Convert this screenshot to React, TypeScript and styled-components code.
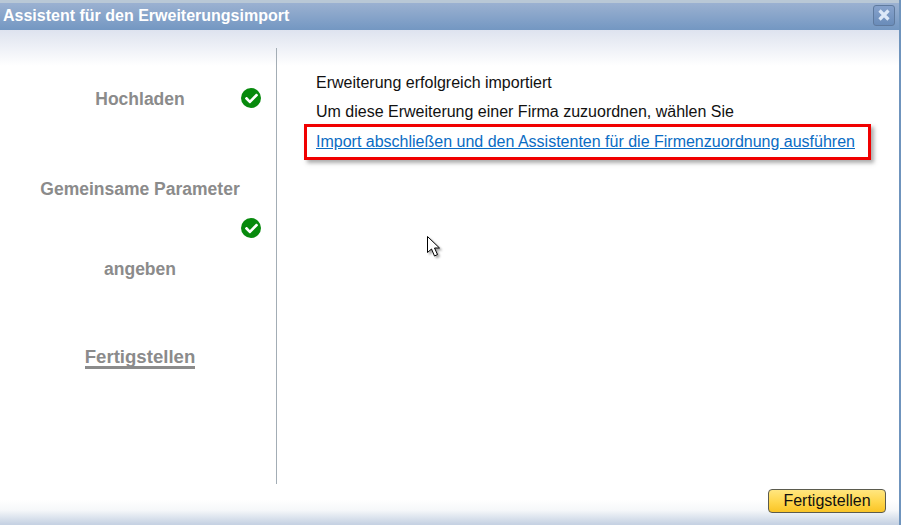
import styled, { createGlobalStyle } from "styled-components";
import { FaCheck } from "react-icons/fa";

const GlobalStyle = createGlobalStyle`
    html, body {
        margin: 0;
        padding: 0;
        background: #fff;
    }
    body {
        font-family: "Liberation Sans", Arial, sans-serif;
    }
`;

const Window = styled.div`
    position: relative;
    width: 901px;
    height: 525px;
    box-sizing: border-box;
    overflow: hidden;
    display: flex;
    flex-direction: column;
    border-right: 2px solid #6f94bd;
    background: linear-gradient(
        to bottom,
        #dee3ef 30px,
        #ffffff 66px,
        #ffffff 500px,
        #f6f8fa 510px,
        #c6d2e3 524px
    );
`;

const TitleBar = styled.div`
    height: 30px;
    box-sizing: border-box;
    flex-shrink: 0;
    display: flex;
    align-items: center;
    justify-content: space-between;
    padding: 3px 4px 0 3px;
    border-top: 3px solid #b9c8d6;
    background: linear-gradient(to bottom, #9bb1d1, #7397c2);
`;

const Title = styled.h1`
    margin: 0;
    font-size: 16px;
    font-weight: bold;
    color: #fff;
    position: relative;
    top: -2px;
`;

const CloseButton = styled.button`
    width: 22px;
    height: 21px;
    padding: 0;
    display: flex;
    align-items: center;
    justify-content: center;
    position: relative;
    top: -3px;
    border: 1px solid #5f7a9e;
    border-radius: 3px;
    background: linear-gradient(to bottom, #86a2cc, #6a8cb9);

    svg {
        display: block;
    }
`;

const Body = styled.div`
    flex: 1;
    display: flex;
    padding-top: 18px;
`;

const Sidebar = styled.nav`
    width: 277px;
    height: 436px;
    box-sizing: border-box;
    padding: 30px 0 0 40px;
    border-right: 1px solid #a3adb5;
    display: flex;
    flex-direction: column;
    gap: 50px;
`;

const Step = styled.div`
    display: flex;
    flex-direction: column;
`;

const StepLine = styled.div`
    height: 40px;
    display: grid;
    grid-template-columns: 200px 21px;
    column-gap: 1px;
    align-items: center;
`;

const StepLabel = styled.span<{ $current?: boolean }>`
    justify-self: center;
    position: relative;
    top: ${props => (props.$current ? "0" : "1px")};
    font-size: ${props => (props.$current ? "18.6px" : "17.5px")};
    font-weight: bold;
    line-height: 19px;
    white-space: nowrap;
    color: #8b8b8b;
    ${props => props.$current && "border-bottom: 3px solid #8b8b8b;"}
`;

const CheckBadge = styled.span`
    grid-column: 2;
    width: 20px;
    height: 20px;
    border-radius: 50%;
    display: flex;
    align-items: center;
    justify-content: center;
    background: #078a0d;
    color: #fff;
    font-size: 13px;
`;

const Content = styled.main`
    flex: 1;
    padding: 23px 0 0 27px;
    font-size: 16px;
    color: #111;
`;

const Line = styled.p`
    margin: 0 0 0 12px;
    height: 29px;
    line-height: 24px;
`;

const Highlight = styled.div`
    width: 567px;
    height: 36px;
    box-sizing: border-box;
    margin-top: -5px;
    padding-left: 9px;
    display: flex;
    align-items: center;
    border: 3px solid #f00000;
    box-shadow: 3px 3px 4px rgba(90, 90, 90, 0.5);
`;

const WizardLink = styled.a`
    color: #0a6cc4;
    text-decoration: underline;
    white-space: nowrap;
    cursor: pointer;
`;

const Footer = styled.div`
    flex-shrink: 0;
    height: 41px;
    display: flex;
    justify-content: flex-end;
    padding: 0 13px 0 0;
`;

const FinishButton = styled.button`
    width: 118px;
    height: 24px;
    margin-top: 5px;
    padding: 0;
    border: 1px solid #5b5b4e;
    border-radius: 4px;
    font-family: inherit;
    font-size: 16px;
    color: #111;
    background: linear-gradient(to bottom, #ffe680, #ffd64a 55%, #f9c426);
`;

const Cursor = styled.svg`
    position: absolute;
    left: 427px;
    top: 236px;
    filter: drop-shadow(2px 2px 1px rgba(0, 0, 0, 0.35));
`;

function Check() {
    return (
        <CheckBadge>
            <FaCheck />
        </CheckBadge>
    );
}

export default function App() {
    return (
        <>
            <GlobalStyle />
            <Window>
                <TitleBar>
                    <Title>Assistent für den Erweiterungsimport</Title>
                    <CloseButton aria-label="Schließen">
                        <svg width="14" height="14" viewBox="0 0 14 14">
                            <path d="M2.5 2.5 L11.5 11.5 M11.5 2.5 L2.5 11.5" stroke="#dce8f8" strokeWidth="3.2" />
                        </svg>
                    </CloseButton>
                </TitleBar>
                <Body>
                    <Sidebar>
                        <Step>
                            <StepLine>
                                <StepLabel>Hochladen</StepLabel>
                                <Check />
                            </StepLine>
                        </Step>
                        <Step>
                            <StepLine>
                                <StepLabel>Gemeinsame Parameter</StepLabel>
                            </StepLine>
                            <StepLine>
                                <Check />
                            </StepLine>
                            <StepLine>
                                <StepLabel>angeben</StepLabel>
                            </StepLine>
                        </Step>
                        <Step>
                            <StepLine>
                                <StepLabel $current>Fertigstellen</StepLabel>
                            </StepLine>
                        </Step>
                    </Sidebar>
                    <Content>
                        <Line>Erweiterung erfolgreich importiert</Line>
                        <Line>Um diese Erweiterung einer Firma zuzuordnen, wählen Sie</Line>
                        <Highlight>
                            <WizardLink>Import abschließen und den Assistenten für die Firmenzuordnung ausführen</WizardLink>
                        </Highlight>
                    </Content>
                </Body>
                <Footer>
                    <FinishButton>Fertigstellen</FinishButton>
                </Footer>
                <Cursor width="16" height="24" viewBox="0 0 16 24">
                    <path
                        d="M0.5 0.5 L0.5 16.5 L4.5 13 L7.5 20 L10.5 18.5 L7.5 12 L12.5 12 Z"
                        fill="#fff"
                        stroke="#000"
                        strokeWidth="1"
                    />
                </Cursor>
            </Window>
        </>
    );
}
